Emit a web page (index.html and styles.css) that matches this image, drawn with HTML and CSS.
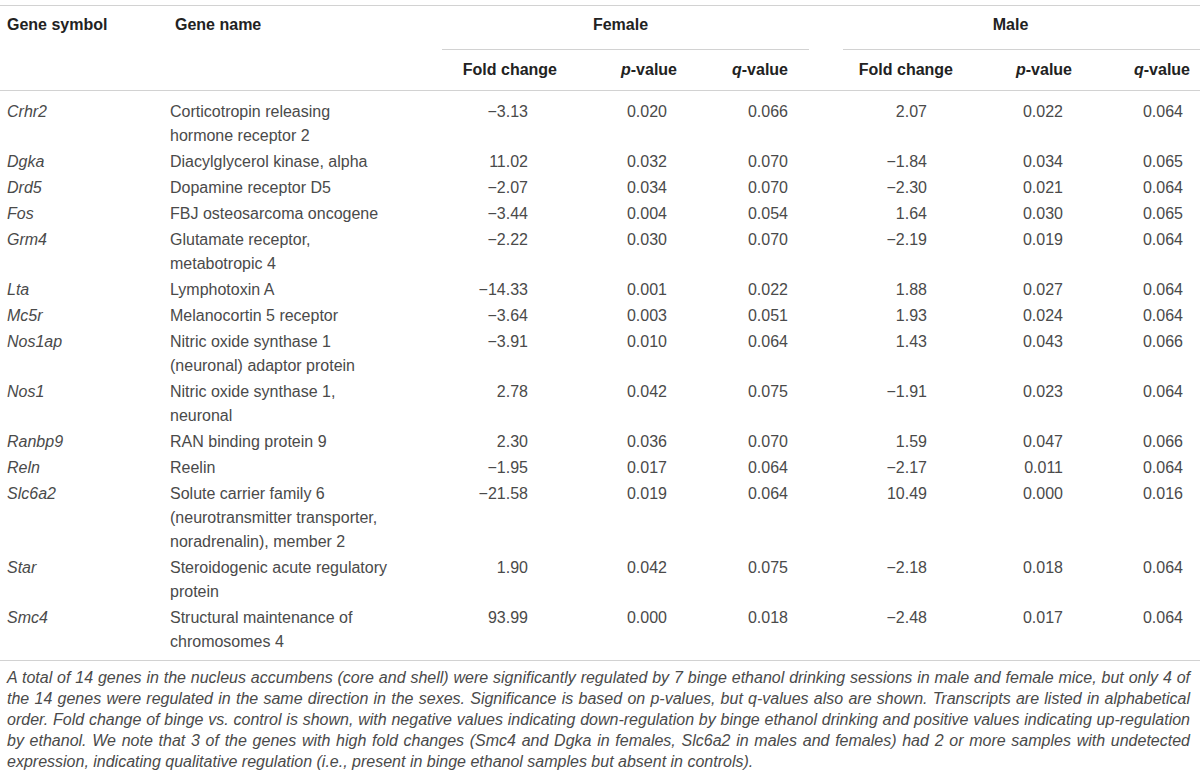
FILE: index.html
```html
<!DOCTYPE html>
<html lang="en">
<head>
<meta charset="utf-8">
<title>Gene table</title>
<link rel="stylesheet" href="styles.css">
</head>
<body>
<div class="page">
<table class="genes">
  <colgroup>
    <col class="w1"><col class="w2"><col class="w3"><col class="w4"><col class="w5"><col class="w6"><col class="w7"><col class="w8">
  </colgroup>
  <thead>
    <tr class="hrow1">
      <th rowspan="2" class="sym">Gene symbol</th>
      <th rowspan="2" class="name">Gene name</th>
      <th colspan="3" class="grp grp-f"><div class="grp-label">Female</div></th>
      <th colspan="3" class="grp grp-m"><div class="grp-label">Male</div></th>
    </tr>
    <tr class="hrow2">
      <th class="c3">Fold change</th>
      <th class="c4"><i>p</i>-value</th>
      <th class="c5"><i>q</i>-value</th>
      <th class="c6">Fold change</th>
      <th class="c7"><i>p</i>-value</th>
      <th class="c8"><i>q</i>-value</th>
    </tr>
  </thead>
  <tbody>
    <tr><td class="sym">Crhr2</td><td class="name">Corticotropin releasing hormone receptor 2</td><td class="c3">−3.13</td><td class="c4">0.020</td><td class="c5">0.066</td><td class="c6">2.07</td><td class="c7">0.022</td><td class="c8">0.064</td></tr>
    <tr><td class="sym">Dgka</td><td class="name">Diacylglycerol kinase, alpha</td><td class="c3">11.02</td><td class="c4">0.032</td><td class="c5">0.070</td><td class="c6">−1.84</td><td class="c7">0.034</td><td class="c8">0.065</td></tr>
    <tr><td class="sym">Drd5</td><td class="name">Dopamine receptor D5</td><td class="c3">−2.07</td><td class="c4">0.034</td><td class="c5">0.070</td><td class="c6">−2.30</td><td class="c7">0.021</td><td class="c8">0.064</td></tr>
    <tr><td class="sym">Fos</td><td class="name">FBJ osteosarcoma oncogene</td><td class="c3">−3.44</td><td class="c4">0.004</td><td class="c5">0.054</td><td class="c6">1.64</td><td class="c7">0.030</td><td class="c8">0.065</td></tr>
    <tr><td class="sym">Grm4</td><td class="name">Glutamate receptor, metabotropic 4</td><td class="c3">−2.22</td><td class="c4">0.030</td><td class="c5">0.070</td><td class="c6">−2.19</td><td class="c7">0.019</td><td class="c8">0.064</td></tr>
    <tr><td class="sym">Lta</td><td class="name">Lymphotoxin A</td><td class="c3">−14.33</td><td class="c4">0.001</td><td class="c5">0.022</td><td class="c6">1.88</td><td class="c7">0.027</td><td class="c8">0.064</td></tr>
    <tr><td class="sym">Mc5r</td><td class="name">Melanocortin 5 receptor</td><td class="c3">−3.64</td><td class="c4">0.003</td><td class="c5">0.051</td><td class="c6">1.93</td><td class="c7">0.024</td><td class="c8">0.064</td></tr>
    <tr><td class="sym">Nos1ap</td><td class="name">Nitric oxide synthase 1 (neuronal) adaptor protein</td><td class="c3">−3.91</td><td class="c4">0.010</td><td class="c5">0.064</td><td class="c6">1.43</td><td class="c7">0.043</td><td class="c8">0.066</td></tr>
    <tr><td class="sym">Nos1</td><td class="name">Nitric oxide synthase 1, neuronal</td><td class="c3">2.78</td><td class="c4">0.042</td><td class="c5">0.075</td><td class="c6">−1.91</td><td class="c7">0.023</td><td class="c8">0.064</td></tr>
    <tr><td class="sym">Ranbp9</td><td class="name">RAN binding protein 9</td><td class="c3">2.30</td><td class="c4">0.036</td><td class="c5">0.070</td><td class="c6">1.59</td><td class="c7">0.047</td><td class="c8">0.066</td></tr>
    <tr><td class="sym">Reln</td><td class="name">Reelin</td><td class="c3">−1.95</td><td class="c4">0.017</td><td class="c5">0.064</td><td class="c6">−2.17</td><td class="c7">0.011</td><td class="c8">0.064</td></tr>
    <tr><td class="sym">Slc6a2</td><td class="name">Solute carrier family 6 (neurotransmitter transporter, noradrenalin), member 2</td><td class="c3">−21.58</td><td class="c4">0.019</td><td class="c5">0.064</td><td class="c6">10.49</td><td class="c7">0.000</td><td class="c8">0.016</td></tr>
    <tr><td class="sym">Star</td><td class="name">Steroidogenic acute regulatory protein</td><td class="c3">1.90</td><td class="c4">0.042</td><td class="c5">0.075</td><td class="c6">−2.18</td><td class="c7">0.018</td><td class="c8">0.064</td></tr>
    <tr><td class="sym">Smc4</td><td class="name">Structural maintenance of chromosomes 4</td><td class="c3">93.99</td><td class="c4">0.000</td><td class="c5">0.018</td><td class="c6">−2.48</td><td class="c7">0.017</td><td class="c8">0.064</td></tr>
  </tbody>
</table>
<p class="note">A total of 14 genes in the nucleus accumbens (core and shell) were significantly regulated by 7 binge ethanol drinking sessions in male and female mice, but only 4 of the 14 genes were regulated in the same direction in the sexes. Significance is based on p-values, but q-values also are shown. Transcripts are listed in alphabetical order. Fold change of binge vs. control is shown, with negative values indicating down-regulation by binge ethanol drinking and positive values indicating up-regulation by ethanol. We note that 3 of the genes with high fold changes (Smc4 and Dgka in females, Slc6a2 in males and females) had 2 or more samples with undetected expression, indicating qualitative regulation (i.e., present in binge ethanol samples but absent in controls).</p>
</div>
</body>
</html>
```

FILE: styles.css
```css
html, body {
  margin: 0;
  padding: 0;
  background: #ffffff;
}

.page {
  padding-top: 5px;
  font-family: "Liberation Sans", Arial, sans-serif;
  font-size: 16px;
  color: #4a4a4a;
}

.genes {
  width: 1200px;
  border-collapse: collapse;
  table-layout: fixed;
  border-top: 1px solid #d2d2d2;
  border-bottom: 1px solid #d2d2d2;
}

.w1 { width: 163px; }
.w2 { width: 279px; }
.w3 { width: 125px; }
.w4 { width: 138px; }
.w5 { width: 138px; }
.w6 { width: 122px; }
.w7 { width: 125px; }
.w8 { width: 110px; }

th, td {
  line-height: 24px;
  padding: 1px 0;
  vertical-align: top;
}

th {
  font-weight: bold;
  color: #222222;
}

thead {
  border-bottom: 1px solid #d2d2d2;
}

th.sym, th.name {
  text-align: left;
  padding-top: 7px;
}

th.sym { padding-left: 7px; }
th.name { padding-left: 12px; }

th.grp {
  padding: 0;
}

.grp-label {
  padding: 7px 0 12px;
  line-height: 24px;
  text-align: center;
  border-bottom: 1px solid #d2d2d2;
}

.grp-f .grp-label {
  margin-right: 34px;
  padding-right: 10px;
}

.grp-m .grp-label {
  padding-right: 22px;
}

.hrow2 th {
  padding-top: 8px;
  padding-bottom: 8px;
  text-align: right;
}

.hrow2 .c3 { padding-right: 10px; }
.hrow2 .c4 { padding-right: 28px; }
.hrow2 .c5 { padding-right: 55px; }
.hrow2 .c6 { padding-right: 12px; }
.hrow2 .c7 { padding-right: 18px; }
.hrow2 .c8 { padding-right: 10px; }

td.sym {
  font-style: italic;
  padding-left: 7px;
}

td.name {
  padding-left: 7px;
  padding-right: 50px;
}

td.c3, td.c4, td.c5, td.c6, td.c7, td.c8 {
  text-align: right;
}

td.c3 { padding-right: 39px; }
td.c4 { padding-right: 38px; }
td.c5 { padding-right: 55px; }
td.c6 { padding-right: 38px; }
td.c7 { padding-right: 27px; }
td.c8 { padding-right: 17px; }

tbody tr:first-child td {
  padding-top: 9px;
}

tbody tr:last-child td {
  padding-bottom: 6px;
}

.note {
  margin: 0;
  padding: 6px 10px 0 7px;
  font-style: italic;
  line-height: 21px;
  text-align: justify;
  color: #4a4a4a;
}
```
